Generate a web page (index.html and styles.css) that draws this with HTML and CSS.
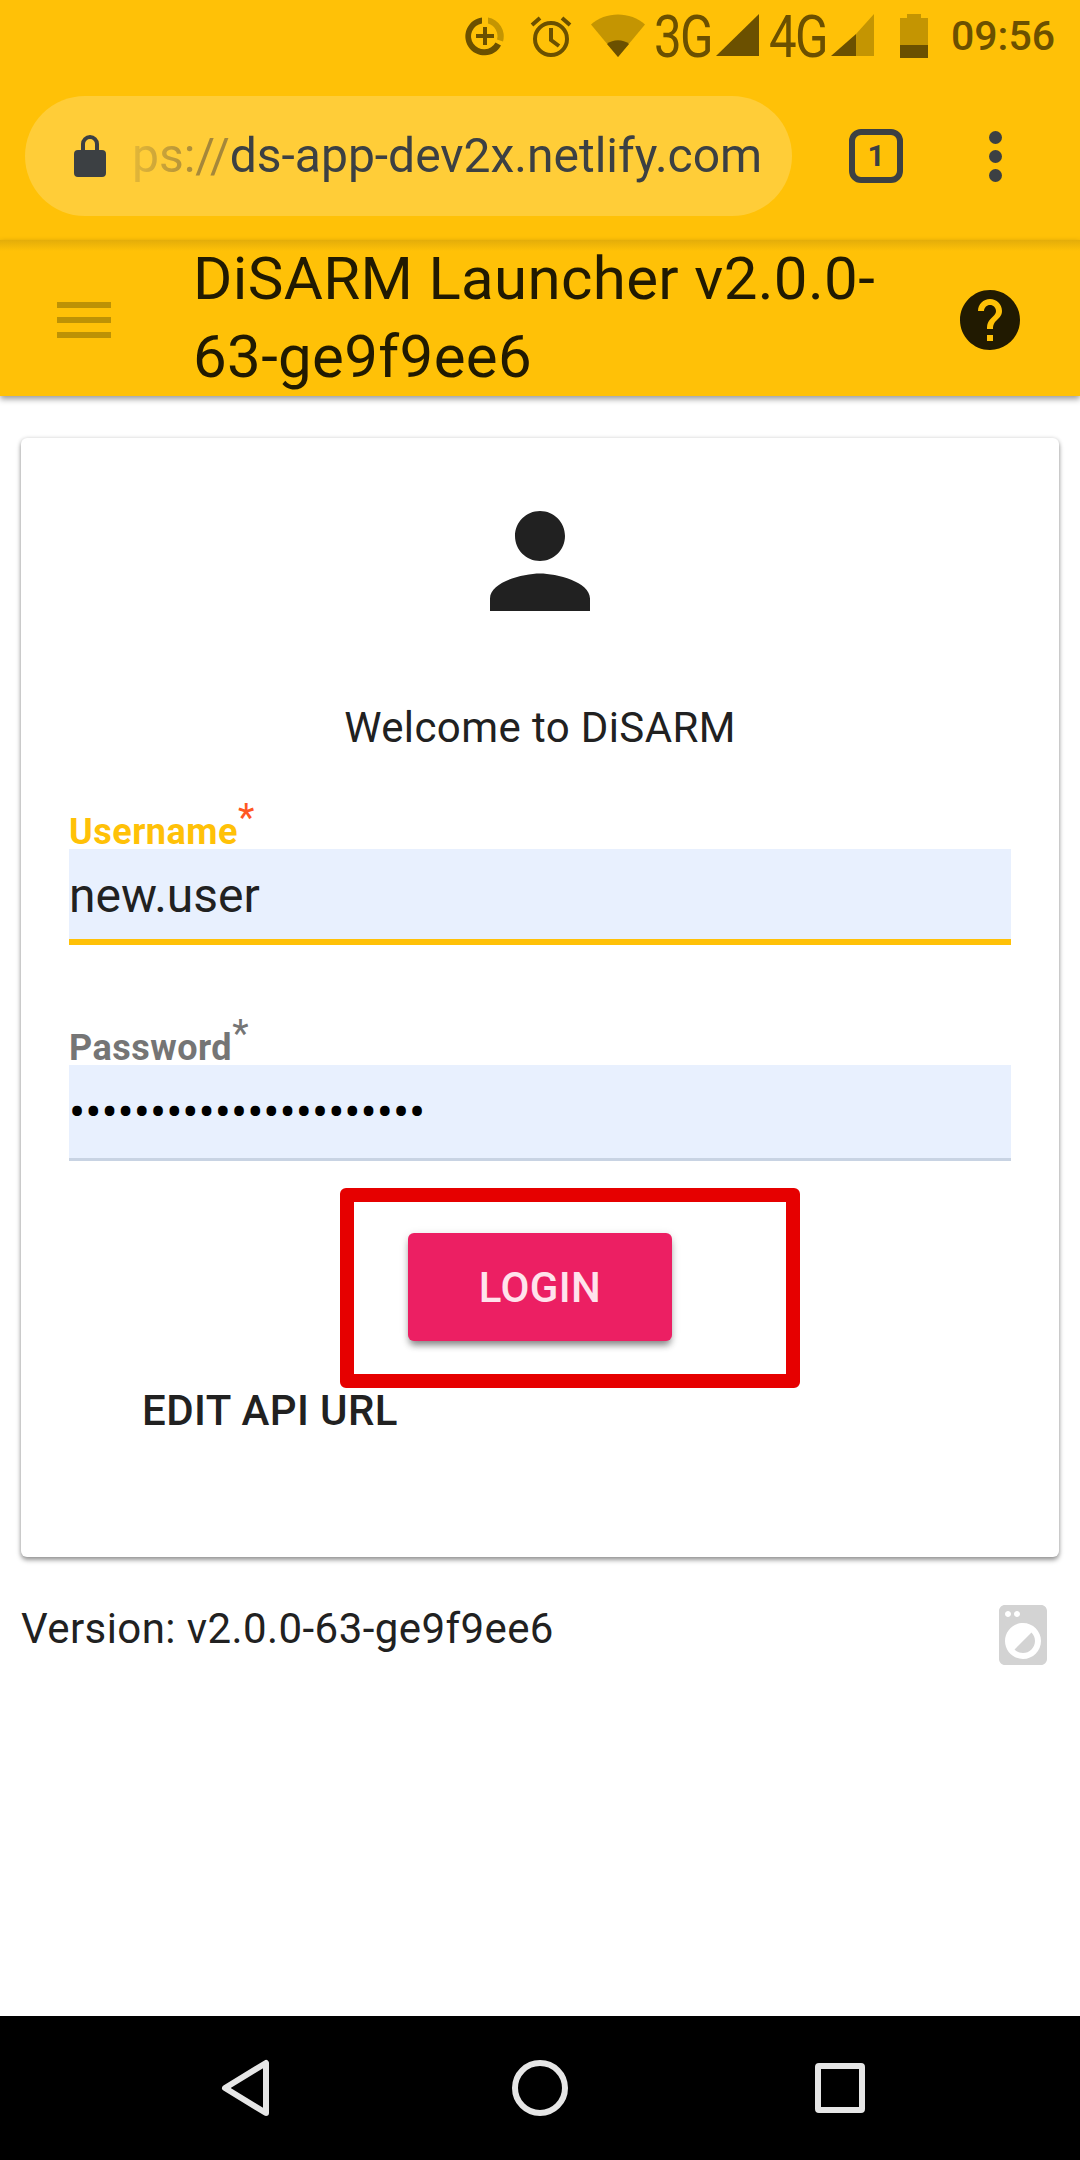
FILE: index.html
```html
<!DOCTYPE html>
<html lang="en">
<head>
    <meta charset="UTF-8">
    <meta name="viewport" content="width=device-width, initial-scale=1.0">
    <title>DiSARM Launcher</title>
    <link rel="stylesheet" href="styles.css">
</head>
<body>
    <div class="browser-top">
        <div class="status-bar">
            <!-- data saver -->
            <svg class="st-saver" width="44" height="44" viewBox="0 0 44 44">
                <path class="st-light" d="M25 3.500a19 19 0 0 1 15 24l-6-2a13 13 0 0 0-9-16z"/>
                <path class="st-dark" d="M19 3.500a19 19 0 1 0 19 28l-5.500-3a13 13 0 1 1-13.500-19z"/>
                <path class="st-dark" d="M20 13h4v7h7v4h-7v7h-4v-7h-7v-4h7z"/>
            </svg>
            <!-- alarm -->
            <svg class="st-alarm" width="44" height="44" viewBox="0 0 44 44">
                <circle class="st-line" cx="22" cy="25" r="16"/>
                <path class="st-line" d="M22 14v12l8 6M3 11l8-7M41 11l-8-7"/>
            </svg>
            <!-- wifi -->
            <svg class="st-wifi" width="54" height="44" viewBox="0 0 54 44">
                <path class="st-light" d="M0 10.500C14-3 40-3 54 10.500L27 43z"/>
                <path class="st-dark" d="M16 30c6-5 16-5 22 0L27 43z"/>
            </svg>
            <span class="net-label">3G</span>
            <svg class="st-signal" width="43" height="44" viewBox="0 0 43 44">
                <path class="st-dark" d="M43 0v42H0z"/>
            </svg>
            <span class="net-label net-label-4g">4G</span>
            <svg class="st-signal" width="43" height="44" viewBox="0 0 43 44">
                <path class="st-light" d="M43 0v42H25V20z"/>
                <path class="st-dark" d="M25 20v22H0z"/>
            </svg>
            <!-- battery -->
            <svg class="st-battery" width="28" height="44" viewBox="0 0 28 44">
                <path class="st-light" d="M7 0h14v4h7v30H0V4h7z"/>
                <path class="st-dark" d="M0 31h28v13H0z"/>
            </svg>
            <span class="st-time">09:56</span>
        </div>
        <div class="url-row">
            <div class="url-pill">
                <svg class="lock-icon" width="32" height="44" viewBox="0 0 32 44">
                    <path d="M4 16h3v-6a9 9 0 0 1 18 0v6h3a4 4 0 0 1 4 4v19a4 4 0 0 1-4 4H4a4 4 0 0 1-4-4V20a4 4 0 0 1 4-4zm7 0h10v-6a5 5 0 0 0-10 0z"/>
                </svg>
                <div class="url-clip"><span class="url-text"><span class="url-scheme">ps://</span>ds-app-dev2x.netlify.com</span></div>
            </div>
            <div class="tab-count">1</div>
            <div class="menu-dots"><i></i><i></i><i></i></div>
        </div>
    </div>

    <header class="app-bar">
        <div class="hamburger"><i></i><i></i><i></i></div>
        <h1 class="app-title">DiSARM Launcher v2.0.0-63-ge9f9ee6</h1>
        <svg class="help-icon" width="72" height="72" viewBox="0 0 24 24">
            <path d="M12 2C6.480 2 2 6.480 2 12s4.480 10 10 10 10-4.480 10-10S17.520 2 12 2zm1 17h-2v-2h2v2zm2.070-7.750l-.9.920C13.450 12.900 13 13.500 13 15h-2v-.5c0-1.100.45-2.100 1.170-2.830l1.240-1.260c.37-.36.59-.86.59-1.410 0-1.100-.9-2-2-2s-2 .9-2 2H8c0-2.210 1.790-4 4-4s4 1.790 4 4c0 .88-.36 1.680-.93 2.250z"/>
        </svg>
    </header>

    <main class="card">
        <svg class="person-icon" width="150" height="150" viewBox="0 0 24 24">
            <path d="M12 12c2.210 0 4-1.790 4-4s-1.790-4-4-4-4 1.790-4 4 1.790 4 4 4zm0 2c-2.670 0-8 1.340-8 4v2h16v-2c0-2.660-5.330-4-8-4z"/>
        </svg>
        <p class="welcome">Welcome to DiSARM</p>

        <label class="field-label label-active" for="username">Username<sup class="req">*</sup></label>
        <input class="field field-active" id="username" type="text" value="new.user">

        <label class="field-label label-second" for="password">Password<sup class="req">*</sup></label>
        <input class="field field-secret" id="password" type="password" value="passwordpassword123456">

        <div class="login-row">
            <button class="login-btn" type="button">LOGIN</button>
            <div class="highlight-box"></div>
        </div>
        <a class="edit-api">EDIT API URL</a>
    </main>

    <div class="version-row">
        <span class="version">Version: v2.0.0-63-ge9f9ee6</span>
        <svg class="laundry-icon" width="72" height="72" viewBox="0 0 24 24">
            <path d="M9.170 16.830c1.560 1.560 4.100 1.560 5.660 0 1.560-1.560 1.560-4.100 0-5.660l-5.660 5.660zM18 2.010L6 2c-1.110 0-2 .89-2 2v16c0 1.110.89 2 2 2h12c1.110 0 2-.89 2-2V4c0-1.110-.89-1.990-2-1.990zM10 4c.55 0 1 .45 1 1s-.45 1-1 1-1-.45-1-1 .45-1 1-1zM7 4c.55 0 1 .45 1 1s-.45 1-1 1-1-.45-1-1 .45-1 1-1zm5 16c-3.310 0-6-2.690-6-6s2.690-6 6-6 6 2.690 6 6-2.690 6-6 6z"/>
        </svg>
    </div>

    <nav class="nav-bar">
        <svg width="56" height="60" viewBox="0 0 56 60">
            <path class="nav-line" d="M48 5v50L7 30z"/>
        </svg>
        <svg class="nav-home" width="60" height="60" viewBox="0 0 60 60">
            <circle class="nav-line" cx="30" cy="30" r="25"/>
        </svg>
        <svg width="56" height="60" viewBox="0 0 56 60">
            <rect class="nav-line" x="6" y="8" width="44" height="44" rx="1"/>
        </svg>
    </nav>
</body>
</html>
```

FILE: styles.css
```css
* {
    box-sizing: border-box;
}
html, body {
    margin: 0;
    padding: 0;
}
body {
    width: 1080px;
    height: 2160px;
    display: flex;
    flex-direction: column;
    overflow: hidden;
    font-family: Roboto, "Liberation Sans", sans-serif;
    color: #212121;
    background-color: #fff;
}

/* phone status bar + browser toolbar */
.browser-top {
    height: 240px;
    background-color: #ffc107;
}
.status-bar {
    height: 72px;
    padding: 14px 25px 0 0;
    display: flex;
    justify-content: flex-end;
    align-items: flex-start;
}
.st-light {
    fill: #c49502;
}
.st-dark {
    fill: #6b5000;
}
.st-line {
    fill: none;
    stroke: #6b5000;
    stroke-width: 4;
}
.st-alarm {
    margin-left: 22px;
}
.st-wifi {
    margin-left: 18px;
}
.net-label {
    width: 54px;
    margin-left: 9px;
    height: 44px;
    font-size: 60px;
    line-height: 46px;
    font-weight: 400;
    color: #6b5000;
    letter-spacing: -2px;
    transform: scaleX(.82);
    transform-origin: left center;
    white-space: nowrap;
}
.net-label-4g {
    margin-left: 10px;
}
.st-signal {
    margin-left: 8px;
}
.st-battery {
    margin-left: 26px;
}
.st-time {
    margin-left: 23px;
    height: 44px;
    font-size: 41px;
    line-height: 44px;
    font-weight: 500;
    color: #6b5000;
}

.url-row {
    height: 168px;
    padding: 24px 0 24px 25px;
    display: flex;
    align-items: center;
}
.url-pill {
    width: 767px;
    height: 120px;
    padding: 0 37px 0 49px;
    border-radius: 60px;
    background-color: #ffcd38;
    display: flex;
    align-items: center;
}
.lock-icon {
    flex: none;
    fill: #3c4043;
}
.url-clip {
    margin-left: 26px;
    flex: 1;
    display: flex;
    justify-content: flex-end;
    -webkit-mask-image: linear-gradient(to right, rgba(0,0,0,.3), #000 70px);
    mask-image: linear-gradient(to right, rgba(0,0,0,.3), #000 70px);
}
.url-text {
    font-size: 48px;
    line-height: 60px;
    color: #3c4043;
    white-space: nowrap;
}
.url-scheme {
    color: #a5873a;
}
.tab-count {
    width: 54px;
    height: 54px;
    margin-left: 57px;
    border: 6px solid #3c4043;
    border-radius: 12px;
    color: #3c4043;
    font-size: 30px;
    font-weight: 700;
    line-height: 42px;
    text-align: center;
}
.menu-dots {
    margin-left: 86px;
    display: flex;
    flex-direction: column;
    gap: 6px;
}
.menu-dots i {
    display: block;
    width: 13px;
    height: 13px;
    border-radius: 50%;
    background-color: #3c4043;
}

/* app bar */
.app-bar {
    position: relative;
    height: 156px;
    padding-left: 57px;
    display: flex;
    align-items: center;
    background: linear-gradient(#e3ad0a, #ffc107 11px);
    box-shadow: 0 3px 6px rgba(0,0,0,.4);
}
.hamburger {
    width: 54px;
    margin-top: 4px;
    display: flex;
    flex-direction: column;
    gap: 9px;
}
.hamburger i {
    display: block;
    height: 6px;
    background-color: #bd9205;
}
.app-title {
    width: 710px;
    margin: 0 0 0 82px;
    font-size: 60px;
    line-height: 78px;
    letter-spacing: .35px;
    font-weight: 400;
    color: #211a01;
}
.help-icon {
    margin: 4px 0 0 51px;
    fill: #211a01;
}

/* login card */
.card {
    height: 1119px;
    margin: 42px 21px 0;
    padding: 48px 48px 0;
    display: flex;
    flex-direction: column;
    background-color: #fff;
    border-radius: 6px;
    box-shadow: 0 3px 5px rgba(0,0,0,.4), 0 0 4px rgba(0,0,0,.12);
}
.person-icon {
    align-self: center;
    fill: #212121;
}
.welcome {
    margin: 64px 0 0;
    font-size: 42px;
    line-height: 56px;
    letter-spacing: .4px;
    text-align: center;
}
.field-label {
    display: block;
    height: 44px;
    font-size: 36px;
    line-height: 54px;
    letter-spacing: .5px;
    font-weight: 700;
    color: #757575;
}
.label-active {
    margin-top: 49px;
    color: #ffc107;
}
.label-active .req {
    color: #ff5722;
}
.label-second {
    margin-top: 76px;
}
.req {
    font-size: 38px;
    font-weight: 400;
    line-height: 0;
}
.field {
    display: block;
    width: 100%;
    height: 96px;
    padding: 2px 0 0 0;
    border: none;
    border-bottom: 3px solid #c8d3e3;
    border-radius: 0;
    outline: none;
    background-color: #e8f0fe;
    font-family: inherit;
    font-size: 48px;
    color: #212121;
}
.field-active {
    border-bottom: 6px solid #ffc107;
}
.field-secret {
    color: #000;
}

.login-row {
    position: relative;
    margin-top: 72px;
    display: flex;
    justify-content: center;
}
.login-btn {
    width: 264px;
    height: 108px;
    padding: 0;
    border: none;
    border-radius: 6px;
    background-color: #ec1f63;
    color: #ffe3ec;
    font-family: inherit;
    font-size: 42px;
    letter-spacing: .4px;
    font-weight: 500;
    box-shadow: 0 6px 7px -2px rgba(0,0,0,.42), 0 2px 10px rgba(0,0,0,.14);
}
/* red annotation drawn over the screenshot */
.highlight-box {
    position: absolute;
    left: 271px;
    top: -45px;
    width: 460px;
    height: 200px;
    border: 14px solid #e60000;
    border-radius: 6px;
}
.edit-api {
    margin: 48px 0 0 73px;
    font-size: 42px;
    line-height: 44px;
    letter-spacing: .4px;
    font-weight: 500;
}

.version-row {
    margin: 42px 21px 0 21px;
    display: flex;
    justify-content: space-between;
    align-items: flex-start;
}
.version {
    margin-top: 6px;
    font-size: 42px;
    line-height: 48px;
    letter-spacing: .42px;
}
.laundry-icon {
    fill: #d3d3d3;
}

/* android nav */
.nav-bar {
    margin-top: auto;
    height: 144px;
    background-color: #000;
    display: flex;
    justify-content: space-between;
    align-items: center;
    padding: 0 212px 0 218px;
}
.nav-home {
    margin-right: 7px;
}
.nav-line {
    fill: none;
    stroke: #e6e6e6;
    stroke-width: 6;
    stroke-linejoin: round;
}
```
